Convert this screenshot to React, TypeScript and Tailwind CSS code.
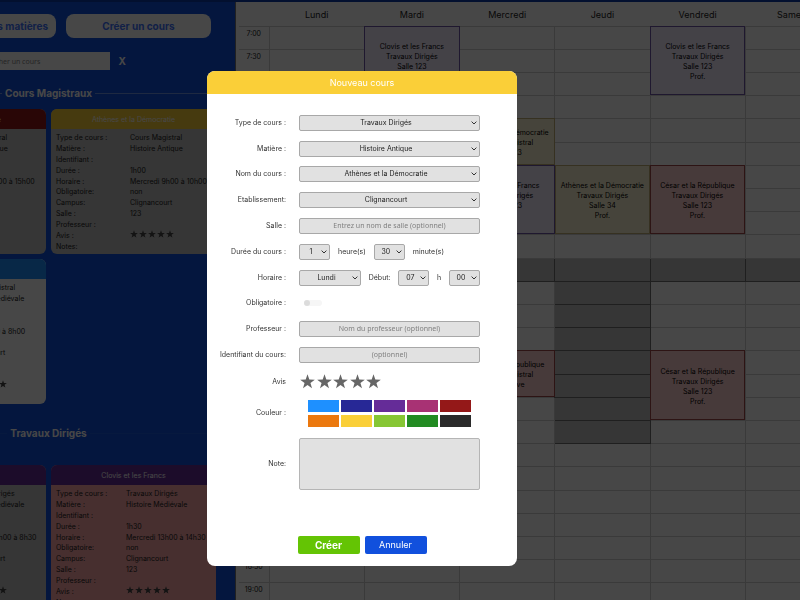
import type { ReactNode } from "react";

const DAYS = ["Lundi", "Mardi", "Mercredi", "Jeudi", "Vendredi", "Samedi"];
const SLOTS = 25;
const LUNCH_SLOT = 10;

type Slot = { day: number; start: number; span: number; tone: string; lines: string[] };

const VIOLET = "bg-[#f2ebff] outline-[#6f58a8]";
const YELLOW = "bg-[#fcf4d4] outline-[#c2b078]";
const RED = "bg-[#ffcfcf] outline-[#a04848]";

const EVENTS: Slot[] = [
  { day: 1, start: 0, span: 3, tone: VIOLET, lines: ["Clovis et les Francs", "Travaux Dirigés", "Salle 123", "Prof."] },
  { day: 4, start: 0, span: 3, tone: VIOLET, lines: ["Clovis et les Francs", "Travaux Dirigés", "Salle 123", "Prof."] },
  { day: 2, start: 4, span: 2, tone: YELLOW, lines: ["Athènes et la Démocratie", "Cours Magistral", "Salle 123"] },
  { day: 2, start: 6, span: 3, tone: VIOLET, lines: ["Clovis et les Francs", "Travaux Dirigés", "Salle 123", "Prof."] },
  { day: 3, start: 6, span: 3, tone: YELLOW, lines: ["Athènes et la Démocratie", "Travaux Dirigés", "Salle 34", "Prof."] },
  { day: 4, start: 6, span: 3, tone: RED, lines: ["César et la République", "Travaux Dirigés", "Salle 123", "Prof."] },
  { day: 2, start: 14, span: 2, tone: RED, lines: ["César et la République", "Cours Magistral", "Salle Cave"] },
  { day: 4, start: 14, span: 3, tone: RED, lines: ["César et la République", "Travaux Dirigés", "Salle 123", "Prof."] },
];

function isBlocked(day: number, slot: number) {
  return slot === LUNCH_SLOT || (day === 3 && slot > LUNCH_SLOT && slot < 18);
}

function slotLabel(slot: number) {
  return `${7 + Math.floor(slot / 2)}:${slot % 2 ? "30" : "00"}`;
}

function DayCell({ day, slot }: { day: number; slot: number }) {
  const event = EVENTS.find((e) => e.day === day && slot >= e.start && slot < e.start + e.span);
  if (event && event.start !== slot) return null;
  if (event) {
    return (
      <td rowSpan={event.span} className={`p-0 pt-[3px] text-center align-middle leading-[10px] text-black outline -outline-offset-1 ${event.tone}`}>
        {event.lines.map((line) => (
          <div key={line} className="whitespace-nowrap">{line}</div>
        ))}
      </td>
    );
  }
  return <td className={isBlocked(day, slot) ? "border border-[#707070] bg-[#c2c2c2] p-0" : "border border-[#cfcfcf] p-0"} />;
}

function Timetable() {
  return (
    <main className="min-w-0 flex-1 overflow-hidden border-l border-[#777] bg-white pl-[3px]">
      <table className="w-[602px] table-fixed border-collapse text-[7px] text-[#222]">
        <thead>
          <tr className="h-6">
            <th className="w-[30px]" />
            {DAYS.map((day) => (
              <th key={day} scope="col" className="p-0 pt-[2px] text-[9px] leading-[12px] font-normal">{day}</th>
            ))}
          </tr>
        </thead>
        <tbody>
          {Array.from({ length: SLOTS }, (_, slot) => (
            <tr key={slot} className={slot % 5 === 4 ? "h-6" : "h-[23px]"}>
              <th scope="row" className="border-y border-r border-[#cfcfcf] p-0 pt-[2px] align-top leading-[10px] font-normal">
                {slotLabel(slot)}
              </th>
              {DAYS.map((day, index) => (
                <DayCell key={day} day={index} slot={slot} />
              ))}
            </tr>
          ))}
        </tbody>
      </table>
    </main>
  );
}

function Star({ className }: { className: string }) {
  return (
    <svg viewBox="0 0 24 24" className={className} fill="currentColor" aria-hidden="true">
      <path d="M12 0.5l2.9 8.3 8.8.2-7 5.3 2.5 8.5-7.2-5.1-7.2 5.1 2.5-8.5-7-5.3 8.8-.2z" />
    </svg>
  );
}

type CardProps = {
  title: string;
  header: string;
  body: string;
  columns: string;
  values: string[];
};

const CARD_LABELS = ["Type de cours :", "Matière :", "Identifiant :", "Durée :", "Horaire :", "Obligatoire:", "Campus:", "Salle :", "Professeur :"];

function CourseCard({ title, header, body, columns, values }: CardProps) {
  return (
    <article className={`overflow-hidden rounded-md text-[7px] leading-[10px] text-[#222] ${body}`}>
      <h3 className={`flex h-5 items-center justify-center pt-px text-white ${header}`}>{title}</h3>
      <dl className={`grid h-[125px] auto-rows-fr pt-1 pb-[2px] pl-[5px] whitespace-nowrap ${columns}`}>
        {CARD_LABELS.map((label, i) => (
          <div key={label} className="col-span-2 grid grid-cols-subgrid items-center">
            <dt>{label}</dt>
            <dd>{values[i]}</dd>
          </div>
        ))}
        <div className="col-span-2 grid grid-cols-subgrid items-center">
          <dt>Avis :</dt>
          <dd className="flex items-start gap-px self-start text-[#444]">
            {[1, 2, 3, 4, 5].map((n) => (
              <Star key={n} className="size-2" />
            ))}
          </dd>
        </div>
        <div className="col-span-2 grid grid-cols-subgrid items-center">
          <dt>Notes:</dt>
        </div>
      </dl>
    </article>
  );
}

function SectionTitle({ children, line }: { children: ReactNode; line: string }) {
  return (
    <h2 className="flex items-center gap-[3px] text-[10px] leading-4 font-bold text-white">
      <span className={`h-px flex-1 ${line}`} />
      {children}
      <span className={`h-px flex-1 ${line}`} />
    </h2>
  );
}

function Sidebar() {
  return (
    <aside className="flex w-[235px] shrink-0 justify-end overflow-hidden bg-[#1150dd] pr-[19px]">
      <div className="w-[335px] shrink-0 pt-3">
        <div className="flex justify-end gap-[10px] pr-[5px]">
          <button type="button" className="h-6 rounded-lg bg-white px-2 text-[10px] font-bold whitespace-nowrap text-[#3f74ff]">
            Gérer les matières
          </button>
          <button type="button" className="h-6 w-[145px] rounded-lg bg-white text-[10px] font-bold text-[#3f74ff]">
            Créer un cours
          </button>
        </div>
        <div className="mt-[14px] flex items-center justify-end gap-[9px] pr-[90px]">
          <input
            aria-label="Rechercher un cours"
            placeholder="Rechercher un cours"
            className="h-[18px] w-[145px] bg-white px-2 font-['Noto_Sans',sans-serif] text-[7px] placeholder:text-[#888]"
          />
          <button type="button" className="text-[10px] leading-[18px] font-bold text-white">X</button>
        </div>
        <div className="mt-[15px]">
          <SectionTitle line="bg-[#6e93e8]">Cours Magistraux</SectionTitle>
        </div>
        <div className="mt-2 grid grid-cols-[165px_165px] gap-[5px]">
          <CourseCard
            title="César et la République"
            header="bg-[#941818]"
            body="bg-[#c0c0c0]"
            columns="grid-cols-[69px_auto]"
            values={["Cours Magistral", "Histoire Antique", "", "1h00", "Mercredi 14h00 à 15h00", "non", "Sorbonne", "Cave", ""]}
          />
          <CourseCard
            title="Athènes et la Démocratie"
            header="bg-[#facf38]"
            body="bg-[#c0c0c0]"
            columns="grid-cols-[74px_auto]"
            values={["Cours Magistral", "Histoire Antique", "", "1h00", "Mercredi 9h00 à 10h00", "non", "Clignancourt", "123", ""]}
          />
          <CourseCard
            title="Clovis et les Francs"
            header="bg-[#1e90ff]"
            body="bg-white"
            columns="grid-cols-[77px_auto]"
            values={["Cours Magistral", "Histoire Médiévale", "", "1h00", "Lundi 7h00 à 8h00", "non", "Clignancourt", "", ""]}
          />
        </div>
        <div className="mt-[21px]">
          <SectionTitle line="bg-[#1c59de]">Travaux Dirigés</SectionTitle>
        </div>
        <div className="mt-[24px] grid grid-cols-[165px_165px] gap-[5px]">
          <CourseCard
            title="Clovis et les Francs"
            header="bg-[#652c98]"
            body="bg-[#c0c0c0]"
            columns="grid-cols-[77px_auto]"
            values={["Travaux Dirigés", "Histoire Médiévale", "", "1h30", "Vendredi 7h00 à 8h30", "non", "Clignancourt", "123", ""]}
          />
          <CourseCard
            title="Clovis et les Francs"
            header="bg-[#652c98]"
            body="bg-[#ffa9a9]"
            columns="grid-cols-[70px_auto]"
            values={["Travaux Dirigés", "Histoire Médiévale", "", "1h30", "Mercredi 13h00 à 14h30", "non", "Clignancourt", "123", ""]}
          />
        </div>
      </div>
    </aside>
  );
}

function Select({ id, label, value, width }: { id: string; label?: string; value: string; width: string }) {
  return (
    <span className={`relative flex h-4 ${width}`}>
      <select
        id={id}
        aria-label={label}
        className="w-full appearance-none rounded-[2px] border border-[#a8a8a8] bg-[#e1e1e1] pr-[7px] text-center text-[7px] leading-[10px] text-[#222] [text-align-last:center]"
      >
        <option>{value}</option>
      </select>
      <svg viewBox="0 0 6 4" className="pointer-events-none absolute top-[6px] right-[3px] h-1 w-[6px]" fill="none" stroke="#333" strokeWidth="1" aria-hidden="true">
        <path d="M.6.6 3 3 5.4.6" />
      </svg>
    </span>
  );
}

function Field({ label, htmlFor, children }: { label: string; htmlFor: string; children: ReactNode }) {
  return (
    <div className="flex items-center gap-[13px]">
      <label htmlFor={htmlFor} className="w-[79px] shrink-0 text-right whitespace-nowrap">{label}</label>
      <div className="min-w-0 flex-1">{children}</div>
    </div>
  );
}

function TextField({ id, label, placeholder }: { id: string; label: string; placeholder: string }) {
  return (
    <Field label={label} htmlFor={id}>
      <input
        id={id}
        placeholder={placeholder}
        className="block h-4 w-full rounded-[2px] border border-[#a8a8a8] bg-[#e1e1e1] pb-px text-center font-['Noto_Sans',sans-serif] text-[7px] placeholder:text-[#808080]"
      />
    </Field>
  );
}

const SWATCHES = [
  { name: "Bleu", tone: "bg-[#1e90ff]" },
  { name: "Indigo", tone: "bg-[#272896]" },
  { name: "Violet", tone: "bg-[#652c98]" },
  { name: "Rose", tone: "bg-[#a83274]" },
  { name: "Rouge", tone: "bg-[#941818]" },
  { name: "Orange", tone: "bg-[#eb780e]" },
  { name: "Jaune", tone: "bg-[#facf38]" },
  { name: "Vert clair", tone: "bg-[#86c634]" },
  { name: "Vert", tone: "bg-[#228b22]" },
  { name: "Noir", tone: "bg-[#2a2a2a]" },
];

function CourseDialog() {
  return (
    <div className="fixed inset-0 flex items-center justify-center bg-black/72 pt-[37px] pr-[76px]">
      <form
        role="dialog"
        aria-labelledby="dialog-title"
        className="w-[310px] overflow-hidden rounded-lg bg-white pb-3 text-[7px] leading-[10px] text-[#333]"
      >
        <h1 id="dialog-title" className="flex h-[23px] items-center justify-center bg-[#facf38] text-[9px] text-white">
          Nouveau cours
        </h1>
        <div className="pt-4 pr-[37px]">
          <div className="grid h-[258px] auto-rows-fr">
            <Field label="Type de cours :" htmlFor="type"><Select id="type" value="Travaux Dirigés" width="w-full" /></Field>
            <Field label="Matière :" htmlFor="subject"><Select id="subject" value="Histoire Antique" width="w-full" /></Field>
            <Field label="Nom du cours :" htmlFor="name"><Select id="name" value="Athènes et la Démocratie" width="w-full" /></Field>
            <Field label="Etablissement:" htmlFor="campus"><Select id="campus" value="Clignancourt" width="w-full" /></Field>
            <TextField id="room" label="Salle :" placeholder="Entrez un nom de salle (optionnel)" />
            <Field label="Durée du cours :" htmlFor="hours">
              <div className="flex items-center gap-2">
                <Select id="hours" value="1" width="w-[31px]" />
                <span>heure(s)</span>
                <Select id="minutes" label="Minutes" value="30" width="w-[31px]" />
                <span>minute(s)</span>
              </div>
            </Field>
            <Field label="Horaire :" htmlFor="day">
              <div className="flex items-center justify-between">
                <Select id="day" value="Lundi" width="w-[62px]" />
                <label htmlFor="start-hour">Début:</label>
                <Select id="start-hour" value="07" width="w-[31px]" />
                <label htmlFor="start-minute">h</label>
                <Select id="start-minute" value="00" width="w-[31px]" />
              </div>
            </Field>
            <Field label="Obligatoire :" htmlFor="mandatory">
              <input
                id="mandatory"
                type="checkbox"
                role="switch"
                className="ml-[5px] block h-[6px] w-[18px] appearance-none rounded-[3px] bg-[#f6f6f6] before:block before:size-[6px] before:rounded-full before:bg-[#dcdcdc]"
              />
            </Field>
            <TextField id="teacher" label="Professeur :" placeholder="Nom du professeur (optionnel)" />
            <TextField id="identifier" label="Identifiant du cours:" placeholder="(optionnel)" />
          </div>
          <div className="flex h-[27px] items-center gap-[13px]">
            <span className="w-[79px] text-right">Avis</span>
            <div className="flex w-[82px] justify-between pl-px text-[#666]">
              {[1, 2, 3, 4, 5].map((n) => (
                <button key={n} type="button" aria-label={`Note ${n} sur 5`}>
                  <Star className="size-[15px]" />
                </button>
              ))}
            </div>
          </div>
          <div className="flex h-9 items-center gap-[22px]">
            <span className="w-[79px] text-right">Couleur :</span>
            <div className="grid grid-cols-[repeat(5,31px)] gap-x-[2px] gap-y-[3px]">
              {SWATCHES.map(({ name, tone }) => (
                <input key={name} type="radio" name="color" aria-label={name} className={`block h-3 w-full appearance-none ${tone}`} />
              ))}
            </div>
          </div>
          <div className="mt-[7px] flex items-center gap-[13px]">
            <label htmlFor="note" className="w-[79px] text-right">Note:</label>
            <textarea id="note" className="block h-[52px] min-w-0 flex-1 resize-none rounded-[2px] border border-[#b5b5b5] bg-[#e1e1e1]" />
          </div>
        </div>
        <div className="mt-[46px] flex justify-center gap-[5px]">
          <button type="button" className="h-[18px] w-[62px] rounded-[2px] bg-[#64c404] text-[10px] font-bold text-white">Créer</button>
          <button type="button" className="h-[18px] w-[62px] rounded-[2px] bg-[#1150dd] text-[9px] text-white">Annuler</button>
        </div>
      </form>
    </div>
  );
}

export default function App() {
  return (
    <div className="flex h-screen flex-col overflow-hidden bg-[#1150dd] font-[Inter,'Liberation_Sans',sans-serif]">
      <header className="h-[2px] shrink-0 bg-[#0c3ca8]" />
      <div className="flex min-h-0 flex-1">
        <Sidebar />
        <Timetable />
      </div>
      <CourseDialog />
    </div>
  );
}
